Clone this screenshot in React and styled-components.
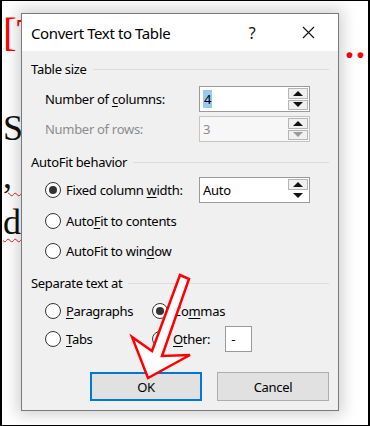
import React from 'react';
import styled, { createGlobalStyle } from 'styled-components';

const GlobalStyle = createGlobalStyle`
  html, body { margin: 0; padding: 0; background: #fff; }
  * { box-sizing: border-box; }
`;

const UI_FONT = `"Noto Sans", "Open Sans", sans-serif`;

const Page = styled.div`
  position: relative;
  width: 370px;
  height: 426px;
  overflow: hidden;
  background: #fff;
  border: 1px solid #000;
  border-left-width: 2px;
  border-right-width: 2px;
`;

// document behind the dialog
const Doc = styled.div`
  font-family: "Liberation Serif", serif;
  font-size: 36px;
  color: #111;
  padding: 7px 1px 0 1px;
`;

const DocLine = styled.div`
  display: flex;
  justify-content: space-between;
  align-items: baseline;
  height: ${p => p.h}px;
  line-height: 48px;
  margin-top: ${p => p.mt || 0}px;
  color: ${p => p.red ? '#ff0000' : '#111'};
`;

const Heading = styled.span`
  font-size: 41px;
`;

const Squiggle = styled.span`
  text-decoration: underline wavy #e02020;
  text-decoration-thickness: 1px;
  text-underline-offset: 4px;
`;

const Dots = styled.span`
  align-self: flex-start;
  margin-top: 14px;
  font-weight: 700;
  letter-spacing: 2px;
`;

const Dialog = styled.div`
  position: absolute;
  left: 19px;
  top: 12px;
  width: 318px;
  height: 398px;
  background: #f0f0f0;
  border: 1px solid #7a7a7a;
  box-shadow: 0 0 14px 4px rgba(0, 0, 0, 0.18);
  font-family: ${UI_FONT};
  font-size: 13px;
  letter-spacing: -0.3px;
  color: #000;
  display: flex;
  flex-direction: column;
`;

const TitleBar = styled.div`
  height: 37px;
  background: #fff;
  display: flex;
  align-items: center;
  padding: 0 0 0 9px;
`;

const Title = styled.div`
  flex: 1;
  font-size: 15px;
  color: #000;
  letter-spacing: -0.4px;
`;

const TitleButton = styled.div`
  width: ${p => p.w}px;
  height: 37px;
  display: flex;
  align-items: center;
  justify-content: center;
  font-size: 16px;
  color: #111;
`;

const Body = styled.div`
  flex: 1;
  padding: 8px 9px 0 9px;
  display: flex;
  flex-direction: column;
`;

const GroupHeader = styled.div`
  display: flex;
  align-items: center;
  gap: 6px;
  height: 20px;
  flex-shrink: 0;
  color: #000;
  margin-top: ${p => p.mt || 0}px;

  &::after {
    content: '';
    flex: 1;
    height: 1px;
    background: #dcdcdc;
  }
`;

const FieldRow = styled.div`
  display: grid;
  grid-template-columns: 154px 111px;
  align-items: center;
  padding-left: 14px;
  flex-shrink: 0;
  height: ${p => p.h || 30}px;
  margin-top: ${p => p.mt || 0}px;
  color: ${p => p.disabled ? '#8c8c8c' : '#000'};
`;

const Spin = styled.div`
  display: flex;
  height: 26px;
  border: 1px solid ${p => p.disabled ? '#c4c4c4' : '#9a9a9a'};
  background: ${p => p.disabled ? '#f7f7f7' : '#fff'};
`;

const SpinText = styled.div`
  flex: 1;
  display: flex;
  align-items: center;
  padding-left: 3px;
  color: ${p => p.disabled ? '#8c8c8c' : '#000'};
`;

const Selected = styled.span`
  background: #99c9ef;
  padding: 0 1px;
`;

const SpinButtons = styled.div`
  width: 21px;
  display: flex;
  flex-direction: column;
  padding: 1px 1px 1px 0;
  gap: 1px;
`;

const SpinButton = styled.div`
  flex: 1;
  display: flex;
  align-items: center;
  justify-content: center;
  background: ${p => p.flat ? 'transparent' : '#f0f0f0'};
  border: 1px solid ${p => p.flat ? 'transparent' : '#b5b5b5'};

  &::before {
    content: '';
    width: 0;
    height: 0;
    border-left: 5px solid transparent;
    border-right: 5px solid transparent;
    ${p => p.down
      ? `border-top: 5px solid ${p.dim ? '#9a9a9a' : '#111'};`
      : `border-bottom: 5px solid ${p.dim ? '#9a9a9a' : '#111'};`}
  }
`;

const RadioRow = styled.div`
  display: flex;
  align-items: center;
  flex-shrink: 0;
  height: ${p => p.h || 30}px;
  padding-left: 14px;
`;

const RadioCell = styled.div`
  display: flex;
  align-items: center;
  gap: 5px;
  width: ${p => p.w ? `${p.w}px` : 'auto'};
`;

const RadioCircle = styled.span`
  width: 16px;
  height: 16px;
  border-radius: 50%;
  border: 1px solid #333;
  background: #fff;
  display: flex;
  align-items: center;
  justify-content: center;
  flex-shrink: 0;

  &::after {
    content: '';
    width: 8px;
    height: 8px;
    border-radius: 50%;
    background: ${p => p.checked ? '#333' : 'transparent'};
  }
`;

const Key = styled.span`
  text-decoration: underline;
  text-underline-offset: 2px;
`;

const SmallBox = styled.div`
  width: 27px;
  height: 26px;
  flex-shrink: 0;
  background: #fff;
  border: 1px solid #9a9a9a;
  padding: 3px 0 0 5px;
  margin-left: 15px;
`;

const Buttons = styled.div`
  display: flex;
  justify-content: flex-end;
  gap: 15px;
  margin-top: 23px;
`;

const Button = styled.div`
  width: 112px;
  height: 29px;
  display: flex;
  align-items: center;
  justify-content: center;
  background: #e1e1e1;
  border: ${p => p.primary ? '2px solid #0078d7' : '1px solid #adadad'};
  color: #000;
`;

const Arrow = styled.svg`
  position: absolute;
  left: -2px;
  top: -1px;
  pointer-events: none;
`;

const RedArrow = () => (
  <Arrow width="370" height="426" viewBox="0 0 370 426">
    <polygon
      points="180,275 189,279 162,356 190,355 148,378 132,337 152,351"
      fill="#fff"
      fillOpacity="0.92"
      stroke="#ff0000"
      strokeWidth="2.5"
      strokeLinejoin="miter"
    />
  </Arrow>
);

const Spinner = ({ value, disabled, selected, flat }) => (
  <Spin disabled={disabled}>
    <SpinText disabled={disabled}>
      {selected ? <Selected>{value}</Selected> : value}
    </SpinText>
    <SpinButtons>
      <SpinButton />
      <SpinButton down dim={disabled} flat={flat} />
    </SpinButtons>
  </Spin>
);

const Radio = ({ checked, children, w }) => (
  <RadioCell w={w}>
    <RadioCircle checked={checked} />
    <span>{children}</span>
  </RadioCell>
);

export default function App() {
  return (
    <>
      <GlobalStyle />
      <Page>
        <Doc>
          <DocLine red h={48}>
            <Heading>[T</Heading>
            <Dots>..</Dots>
          </DocLine>
          <DocLine h={48} mt={48}><span>Su</span></DocLine>
          <DocLine h={46}><Squiggle>, S</Squiggle></DocLine>
          <DocLine h={46}><Squiggle>du</Squiggle></DocLine>
        </Doc>

        <Dialog>
          <TitleBar>
            <Title>Convert Text to Table</Title>
            <TitleButton w={52}>?</TitleButton>
            <TitleButton w={60}>
              <svg width="13" height="13" viewBox="0 0 13 13">
                <path d="M1 1 L12 12 M12 1 L1 12" stroke="#111" strokeWidth="1.1" />
              </svg>
            </TitleButton>
          </TitleBar>

          <Body>
            <GroupHeader>Table size</GroupHeader>
            <FieldRow h={30} mt={5}>
              <span>Number of <Key>c</Key>olumns:</span>
              <Spinner value="4" selected />
            </FieldRow>
            <FieldRow h={30} disabled>
              <span>Number of rows:</span>
              <Spinner value="3" disabled />
            </FieldRow>

            <GroupHeader mt={8}>AutoFit behavior</GroupHeader>
            <FieldRow h={36}>
              <Radio checked>Fixed column <Key>w</Key>idth:</Radio>
              <Spinner value="Auto" flat />
            </FieldRow>
            <RadioRow h={26}>
              <Radio>Auto<Key>F</Key>it to contents</Radio>
            </RadioRow>
            <RadioRow h={34}>
              <Radio>AutoFit to win<Key>d</Key>ow</Radio>
            </RadioRow>

            <GroupHeader mt={5}>Separate text at</GroupHeader>
            <RadioRow h={36}>
              <Radio w={107}><Key>P</Key>aragraphs</Radio>
              <Radio checked>Co<Key>m</Key>mas</Radio>
            </RadioRow>
            <RadioRow h={20}>
              <Radio w={107}><Key>T</Key>abs</Radio>
              <Radio><Key>O</Key>ther:</Radio>
              <SmallBox>-</SmallBox>
            </RadioRow>

            <Buttons>
              <Button primary>OK</Button>
              <Button>Cancel</Button>
            </Buttons>
          </Body>
        </Dialog>

        <RedArrow />
      </Page>
    </>
  );
}
